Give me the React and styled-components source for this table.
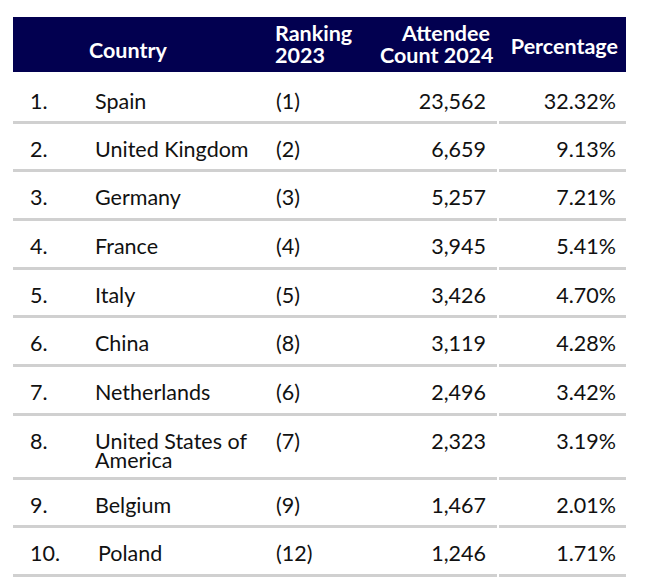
import React from 'react';
import styled, { createGlobalStyle } from 'styled-components';

const rows = [
  { no: '1.', country: 'Spain', rank: '(1)', count: '23,562', pct: '32.32%' },
  { no: '2.', country: 'United Kingdom', rank: '(2)', count: '6,659', pct: '9.13%' },
  { no: '3.', country: 'Germany', rank: '(3)', count: '5,257', pct: '7.21%' },
  { no: '4.', country: 'France', rank: '(4)', count: '3,945', pct: '5.41%' },
  { no: '5.', country: 'Italy', rank: '(5)', count: '3,426', pct: '4.70%' },
  { no: '6.', country: 'China', rank: '(8)', count: '3,119', pct: '4.28%' },
  { no: '7.', country: 'Netherlands', rank: '(6)', count: '2,496', pct: '3.42%' },
  { no: '8.', country: ['United States of', 'America'], rank: '(7)', count: '2,323', pct: '3.19%' },
  { no: '9.', country: 'Belgium', rank: '(9)', count: '1,467', pct: '2.01%' },
  { no: '10.', country: 'Poland', rank: '(12)', count: '1,246', pct: '1.71%', indent: 3 }
];

const App = () => {
  return (
    <>
      <GlobalStyle />
      <Page>
        <Table>
          <HeaderRow>
            <HeadCell />
            <HeadCell $top={21.5} $left={11}>Country</HeadCell>
            <HeadCell $top={4.8} $left={10}>
              <Line>Ranking</Line>
              <Line>2023</Line>
            </HeadCell>
            <HeadCell $top={4.8} $right={7} $align="right">
              <Line>Attendee</Line>
              <Line>Count 2024</Line>
            </HeadCell>
            <HeadCell $top={18} $right={8} $align="right">Percentage</HeadCell>
          </HeaderRow>
          {rows.map((r) => (
            <Row key={r.no}>
              <Cell $left={17}>{r.no}</Cell>
              <Cell $left={17 + (r.indent || 0)}>
                {Array.isArray(r.country)
                  ? r.country.map((line) => <Line key={line}>{line}</Line>)
                  : r.country}
              </Cell>
              <Cell $left={11}>{r.rank}</Cell>
              <Cell $right={11} $align="right">{r.count}</Cell>
              <Cell $right={10} $align="right" $split>{r.pct}</Cell>
            </Row>
          ))}
        </Table>
      </Page>
    </>
  );
};

const GlobalStyle = createGlobalStyle`
  body {
    margin: 0;
    background: #ffffff;
    font-family: Lato, "Liberation Sans", sans-serif;
  }
`;

const Page = styled.div`
  padding: 17px 0 0 13px;
`;

const Table = styled.div`
  width: 613px;
`;

const HeaderRow = styled.div`
  display: grid;
  grid-template-columns: 65px 187px 115px 117px 129px;
  height: 55px;
  margin-bottom: 3px;
  background: #020050;
`;

const HeadCell = styled.div`
  padding: ${(p) => p.$top || 0}px ${(p) => p.$right || 0}px 0 ${(p) => p.$left || 0}px;
  text-align: ${(p) => p.$align || 'left'};
  color: #ffffff;
  font-weight: 700;
  font-size: 21.5px;
  line-height: 22.5px;
  white-space: nowrap;
`;

const Row = styled.div`
  display: grid;
  grid-template-columns: 65px 187px 115px 117px 129px;
  min-height: 48.67px;

  &:nth-of-type(2) > div {
    padding-top: 17px;
  }
`;

const Cell = styled.div`
  box-sizing: border-box;
  padding: 16px ${(p) => p.$right || 0}px 6px ${(p) => p.$left || 0}px;
  margin-left: ${(p) => (p.$split ? '2px' : '0')};
  border-bottom: 3px solid #d0d0d0;
  text-align: ${(p) => p.$align || 'left'};
  color: #111111;
  font-size: 21.5px;
  line-height: 19.5px;
  white-space: nowrap;
`;

const Line = styled.div``;

export default App;
